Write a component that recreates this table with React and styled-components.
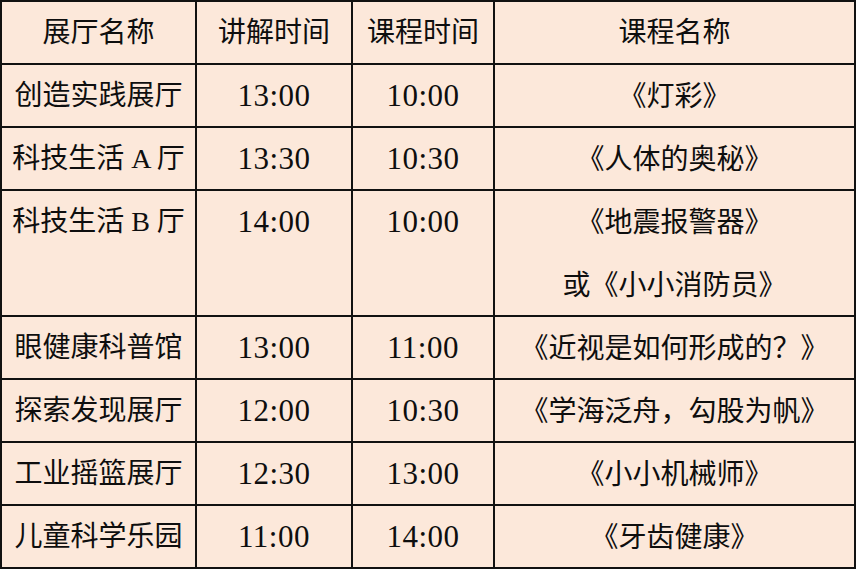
import React from "react";
import styled, { createGlobalStyle } from "styled-components";

const Global = createGlobalStyle`
  html, body { margin: 0; padding: 0; background: #ffffff; }
  body { font-family: "Liberation Serif", "Noto Sans CJK SC", serif; }
`;

const Grid = styled.div`
  display: grid;
  grid-template-columns: 195px 156px 142px 361px;
  grid-auto-rows: 63px;
  width: 856px;
  box-sizing: border-box;
  border-left: 2px solid #111;
  border-top: 2px solid #111;
  background: #fce8da;
  color: #0e0e0e;
`;

const Cell = styled.div`
  box-sizing: border-box;
  border-right: 2px solid #111;
  border-bottom: 2px solid #111;
  grid-row: ${(p) => (p.$span ? `span ${p.$span}` : "auto")};
  text-align: center;
  font-family: "Liberation Serif", "Noto Sans CJK SC", serif;
  font-size: 28px;
  line-height: 62px;
  white-space: nowrap;
  overflow: hidden;
`;

const TimeCell = styled(Cell)`
  font-size: 31px;
  letter-spacing: 0.5px;
`;

const Line = styled.div`
  line-height: 63px;
`;

const headers = ["展厅名称", "讲解时间", "课程时间", "课程名称"];

const rows = [
  { hall: "创造实践展厅", talk: "13:00", course: "10:00", names: ["《灯彩》"] },
  { hall: "科技生活 A 厅", talk: "13:30", course: "10:30", names: ["《人体的奥秘》"] },
  {
    hall: "科技生活 B 厅",
    talk: "14:00",
    course: "10:00",
    names: ["《地震报警器》", "或《小小消防员》"],
  },
  { hall: "眼健康科普馆", talk: "13:00", course: "11:00", names: ["《近视是如何形成的？》"] },
  { hall: "探索发现展厅", talk: "12:00", course: "10:30", names: ["《学海泛舟，勾股为帆》"] },
  { hall: "工业摇篮展厅", talk: "12:30", course: "13:00", names: ["《小小机械师》"] },
  { hall: "儿童科学乐园", talk: "11:00", course: "14:00", names: ["《牙齿健康》"] },
];

export default function App() {
  return (
    <>
      <Global />
      <Grid>
        {headers.map((h) => (
          <Cell key={h}>{h}</Cell>
        ))}
        {rows.map((r) => {
          const span = r.names.length > 1 ? r.names.length : undefined;
          return (
            <React.Fragment key={r.hall}>
              <Cell $span={span}>{r.hall}</Cell>
              <TimeCell $span={span}>{r.talk}</TimeCell>
              <TimeCell $span={span}>{r.course}</TimeCell>
              <Cell $span={span}>
                {r.names.map((n) => (
                  <Line key={n}>{n}</Line>
                ))}
              </Cell>
            </React.Fragment>
          );
        })}
      </Grid>
    </>
  );
}
